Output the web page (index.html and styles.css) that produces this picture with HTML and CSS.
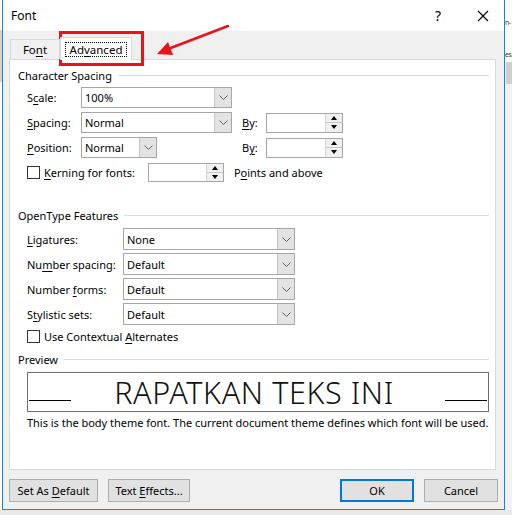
FILE: index.html
```html
<!DOCTYPE html>
<html lang="en">
<head>
    <meta charset="UTF-8">
    <title>Font</title>
    <link rel="stylesheet" href="styles.css">
</head>
<body>

<div class="screen">
    <div class="edge-left"></div>

    <div class="dialog">
        <div class="titlebar">
            <span class="title">Font</span>
            <span class="help">?</span>
            <svg class="close" width="12" height="12" viewBox="0 0 12 12">
                <path d="M1 1 L11 11 M11 1 L1 11" stroke="#000" stroke-width="1.1" fill="none"/>
            </svg>
        </div>

        <div class="client">
            <div class="tabs">
                <div class="tab">Fo<u>n</u>t</div>
                <div class="tab active"><span class="focus">Ad<u>v</u>anced</span></div>
            </div>

            <div class="panel">
                <div class="group-title first"><span>Character Spacing</span><i></i></div>
                <div class="spacing-grid">
                    <label>S<u>c</u>ale:</label>
                    <div class="combo wide"><span class="val">100%</span><span class="drop"><svg width="9" height="5" viewBox="0 0 9 5"><path d="M0.5 0.5 L4.5 4.5 L8.5 0.5" stroke="#606060" fill="none"/></svg></span></div>
                    <span></span><span></span><span></span>

                    <label><u>S</u>pacing:</label>
                    <div class="combo wide"><span class="val">Normal</span><span class="drop"><svg width="9" height="5" viewBox="0 0 9 5"><path d="M0.5 0.5 L4.5 4.5 L8.5 0.5" stroke="#606060" fill="none"/></svg></span></div>
                    <span></span>
                    <label><u>B</u>y:</label>
                    <div class="spin"><span class="spin-btns"><b class="up"></b><b class="down"></b></span></div>

                    <label><u>P</u>osition:</label>
                    <div class="combo short"><span class="val">Normal</span><span class="drop"><svg width="9" height="5" viewBox="0 0 9 5"><path d="M0.5 0.5 L4.5 4.5 L8.5 0.5" stroke="#606060" fill="none"/></svg></span></div>
                    <span></span>
                    <label>B<u>y</u>:</label>
                    <div class="spin"><span class="spin-btns"><b class="up"></b><b class="down"></b></span></div>
                </div>
                <div class="kerning">
                    <span class="check"></span>
                    <label class="kern-label"><u>K</u>erning for fonts:</label>
                    <div class="spin kern-spin"><span class="spin-btns"><b class="up"></b><b class="down"></b></span></div>
                    <label class="points">P<u>o</u>ints and above</label>
                </div>

                <div class="group-title opentype"><span>OpenType Features</span><i></i></div>
                <div class="features">
                    <label><u>L</u>igatures:</label>
                    <div class="combo feat"><span class="val">None</span><span class="drop"><svg width="9" height="5" viewBox="0 0 9 5"><path d="M0.5 0.5 L4.5 4.5 L8.5 0.5" stroke="#606060" fill="none"/></svg></span></div>
                    <label>Nu<u>m</u>ber spacing:</label>
                    <div class="combo feat"><span class="val">Default</span><span class="drop"><svg width="9" height="5" viewBox="0 0 9 5"><path d="M0.5 0.5 L4.5 4.5 L8.5 0.5" stroke="#606060" fill="none"/></svg></span></div>
                    <label>Number <u>f</u>orms:</label>
                    <div class="combo feat"><span class="val">Default</span><span class="drop"><svg width="9" height="5" viewBox="0 0 9 5"><path d="M0.5 0.5 L4.5 4.5 L8.5 0.5" stroke="#606060" fill="none"/></svg></span></div>
                    <label>S<u>t</u>ylistic sets:</label>
                    <div class="combo feat"><span class="val">Default</span><span class="drop"><svg width="9" height="5" viewBox="0 0 9 5"><path d="M0.5 0.5 L4.5 4.5 L8.5 0.5" stroke="#606060" fill="none"/></svg></span></div>
                </div>
                <div class="contextual">
                    <span class="check"></span>
                    <label class="kern-label">Use Contextual <u>A</u>lternates</label>
                </div>

                <div class="group-title preview-title"><span>Preview</span><i></i></div>
                <div class="preview">
                    <span class="rule"></span>
                    <span class="sample">RAPATKAN TEKS INI</span>
                    <span class="rule"></span>
                </div>
                <p class="desc">This is the body theme font. The current document theme defines which font will be used.</p>
            </div>

            <div class="buttons">
                <button class="btn set-default">Set As <u>D</u>efault</button>
                <button class="btn effects">Text <u>E</u>ffects...</button>
                <button class="btn ok">OK</button>
                <button class="btn cancel">Cancel</button>
            </div>
        </div>
    </div>

    <div class="edge-right">
        <span class="frag one">n-</span>
        <span class="frag two">es</span>
        <span class="grey-block"></span>
    </div>

    <!-- annotation drawn over the screenshot -->
    <div class="highlight"></div>
    <svg class="arrow" width="512" height="80" viewBox="0 0 512 80">
        <path d="M228 26 L168 49" stroke="#e8141c" stroke-width="2.6" fill="none" stroke-linecap="round"/>
        <path d="M157 54 L168 42 L173 55 Z" fill="#e8141c"/>
    </svg>
</div>

</body>
</html>
```

FILE: styles.css
```css
body {
    margin: 0;
    padding: 0;
    font-family: "Noto Sans", sans-serif;
    font-size: 11px;
    color: #000;
    background-color: #e6e6e6;
}
u {
    text-decoration: underline;
    text-underline-offset: 2px;
}
.screen {
    position: relative;
    display: flex;
    width: 512px;
    height: 515px;
    overflow: hidden;
    background-color: #e9e9e9;
}
.edge-left {
    width: 2px;
    height: 510px;
    background: linear-gradient(#fff 0 30px, #d4d4d4 30px 82px, #fff 82px);
}
.edge-right {
    position: relative;
    width: 7px;
    height: 510px;
    background: linear-gradient(#fff 0 62px, #f2f2f2 62px);
    overflow: hidden;
}
.frag {
    position: absolute;
    left: 0;
    font-size: 7px;
    letter-spacing: -0.5px;
    color: #333;
}
.frag.one { top: 18px; }
.frag.two { top: 50px; }
.grey-block {
    position: absolute;
    left: 1px;
    top: 62px;
    width: 6px;
    height: 22px;
    background-color: #cfcfcf;
}

/* dialog frame */
.dialog {
    width: 501px;
    height: 509px;
    border: 1px solid #1883d7;
    border-top: none;
    background-color: #f0f0f0;
    display: flex;
    flex-direction: column;
}
.titlebar {
    height: 31px;
    background-color: #fff;
    display: flex;
    align-items: center;
    padding-left: 8px;
    font-size: 12px;
}
.title {
    flex: 1;
}
.help {
    font-size: 14px;
    margin-right: 36px;
}
.close {
    margin-right: 15px;
}
.client {
    flex: 1;
    display: flex;
    flex-direction: column;
}

/* tabs */
.tabs {
    display: flex;
    align-items: flex-end;
    height: 28px;
    padding-left: 7px;
    position: relative;
    z-index: 2;
}
.tab {
    box-sizing: border-box;
    width: 50px;
    height: 20px;
    border: 1px solid #d9d9d9;
    border-bottom: none;
    text-align: center;
    line-height: 20px;
    font-size: 11.5px;
}
.tab.active {
    width: 72px;
    height: 23px;
    margin-bottom: -1px;
    background-color: #fff;
    line-height: 19px;
    padding-top: 2px;
}
.focus {
    display: inline-block;
    border: 1px dotted #000;
    padding: 0 4px;
    line-height: 13px;
}

/* tab panel */
.panel {
    box-sizing: border-box;
    width: 487px;
    height: 411px;
    margin-left: 6px;
    border: 1px solid #d9d9d9;
    background-color: #fff;
    padding: 0 6px 0 8px;
}
.group-title {
    display: flex;
    align-items: center;
    height: 14px;
}
.group-title i {
    flex: 1;
    height: 1px;
    margin-left: 6px;
    background-color: #dcdcdc;
}
.group-title.first { margin-top: 8px; }
.group-title.opentype { margin-top: 25px; }
.group-title.preview-title { margin-top: 7px; }

label {
    white-space: nowrap;
}
.spacing-grid {
    display: grid;
    grid-template-columns: 54px 151px 10px 24px 77px;
    grid-auto-rows: 21px;
    row-gap: 4px;
    align-items: center;
    margin-top: 5px;
    padding-left: 9px;
}
.combo {
    box-sizing: border-box;
    display: flex;
    height: 21px;
    border: 1px solid #a6a6a6;
    background-color: #fff;
}
.combo.wide { width: 151px; }
.combo.short { width: 76px; }
.combo.feat { width: 172px; height: 22px; }
.val {
    flex: 1;
    padding-left: 3px;
    display: flex;
    align-items: center;
}
.drop {
    width: 16px;
    background-color: #e3e3e3;
    border-left: 1px solid #c4c4c4;
    display: flex;
    align-items: center;
    justify-content: center;
}
.spin {
    box-sizing: border-box;
    width: 77px;
    height: 20px;
    border: 1px solid #a6a6a6;
    background-color: #fff;
    display: flex;
    justify-content: flex-end;
}
.spin-btns {
    width: 16px;
    display: flex;
    flex-direction: column;
    background-color: #f0f0f0;
    border-left: 1px solid #d6d6d6;
}
.spin-btns b {
    flex: 1;
    display: flex;
    align-items: center;
    justify-content: center;
}
.spin-btns b.up {
    border-bottom: 1px solid #c8c8c8;
}
.spin-btns b::after {
    content: "";
    border-left: 3px solid transparent;
    border-right: 3px solid transparent;
}
.spin-btns b.up::after { border-bottom: 4px solid #000; }
.spin-btns b.down::after { border-top: 4px solid #000; }

.check {
    box-sizing: border-box;
    width: 13px;
    height: 13px;
    border: 1px solid #333;
    background-color: #fff;
}
.kerning {
    display: flex;
    align-items: center;
    height: 21px;
    margin-top: 4px;
    padding-left: 9px;
}
.kern-label {
    margin-left: 4px;
}
.kern-spin {
    width: 76px;
    height: 19px;
    margin-left: 13px;
}
.points {
    margin-left: 10px;
}
.features {
    display: grid;
    grid-template-columns: 96px 172px;
    grid-auto-rows: 22px;
    row-gap: 3px;
    align-items: center;
    margin-top: 6px;
    padding-left: 9px;
}
.contextual {
    display: flex;
    align-items: center;
    height: 17px;
    margin-top: 3px;
    padding-left: 9px;
}

/* preview */
.preview {
    box-sizing: border-box;
    display: flex;
    align-items: flex-end;
    justify-content: space-between;
    width: 462px;
    height: 40px;
    margin: 6px 0 0 9px;
    border: 1px solid #6e6e6e;
    padding: 0 1px 10px 1px;
}
.rule {
    width: 42px;
    height: 1px;
    background-color: #000;
}
.sample {
    font-size: 30.5px;
    line-height: 34px;
    letter-spacing: 0.6px;
    margin-bottom: -8px;
    margin-right: 8px;
    font-weight: 300;
    color: #111;
}
.desc {
    margin: 3px 0 0 9px;
    line-height: 16px;
    white-space: nowrap;
    letter-spacing: -0.02px;
}

/* bottom buttons */
.buttons {
    display: flex;
    gap: 10px;
    margin-top: 9px;
    padding: 0 6px;
}
.btn {
    box-sizing: border-box;
    height: 23px;
    border: 1px solid #adadad;
    background-color: #e1e1e1;
    font-family: "Noto Sans", sans-serif;
    font-size: 11px;
    color: #000;
    padding: 0;
}
.set-default { width: 89px; }
.effects { width: 82px; }
.ok {
    width: 74px;
    margin-left: auto;
    border: 2px solid #0078d7;
}
.cancel { width: 74px; }

/* red annotation */
.highlight {
    position: absolute;
    left: 59px;
    top: 31px;
    width: 79px;
    height: 29px;
    border: 3px solid #e8141c;
}
.arrow {
    position: absolute;
    left: 0;
    top: 0;
}
```
